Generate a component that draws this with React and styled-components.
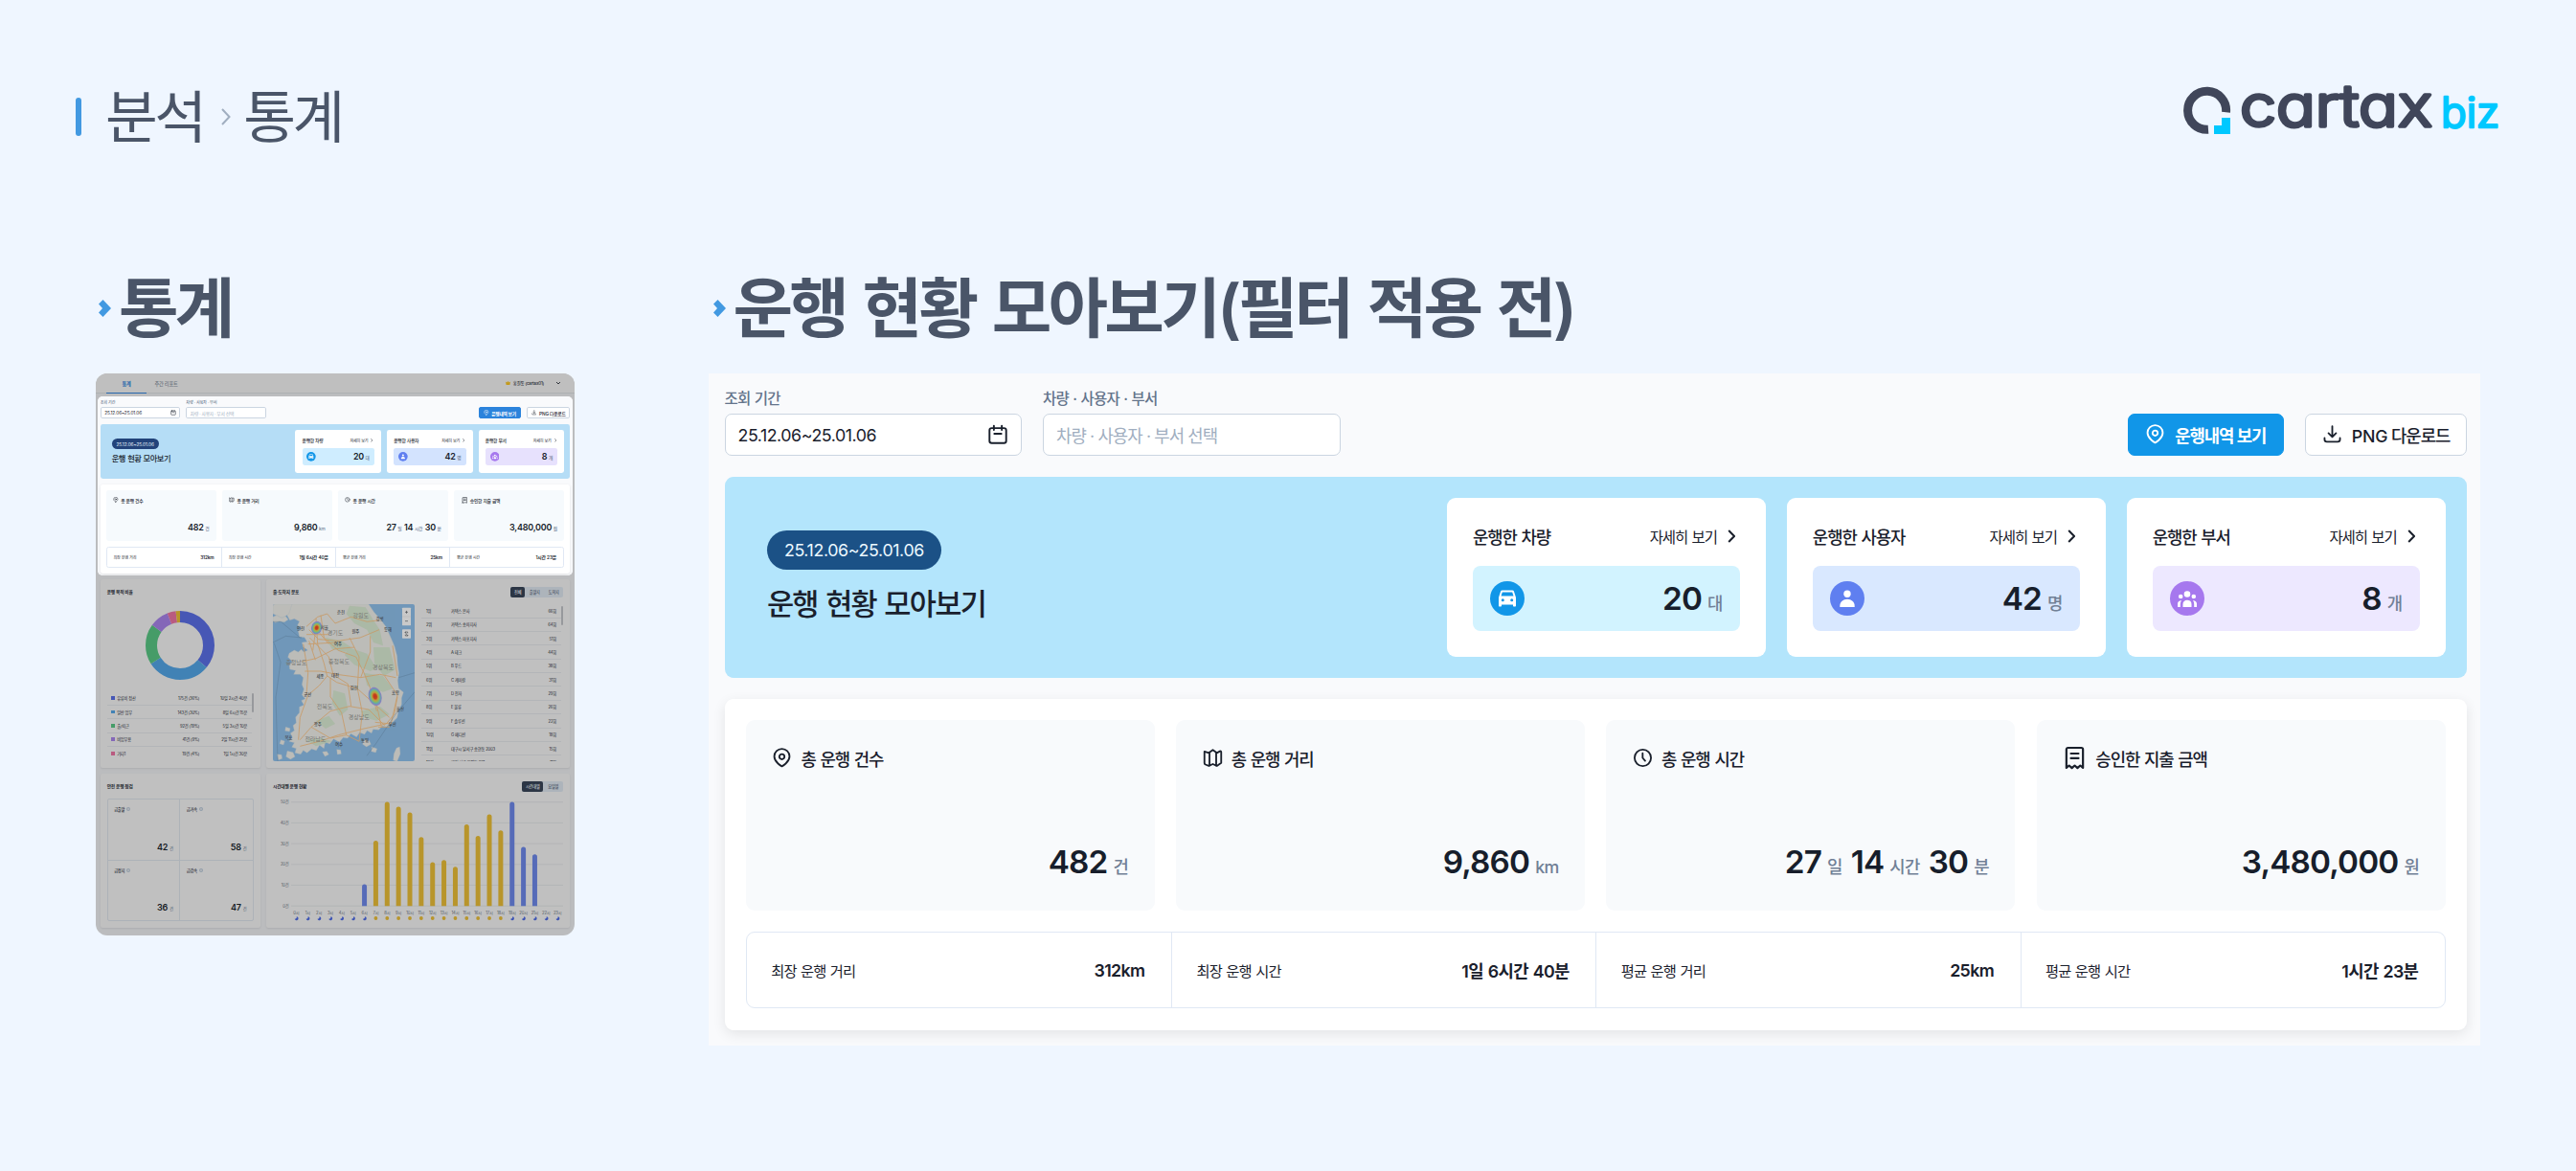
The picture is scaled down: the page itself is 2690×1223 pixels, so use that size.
import styled, { createGlobalStyle, ThemeProvider } from "styled-components";

const GlobalStyle = createGlobalStyle`
  * {
    box-sizing: border-box;
  }
  body {
    margin: 0;
    background: #eff6ff;
    font-family: Inter, "Noto Sans CJK KR", sans-serif;
    color: #1a202c;
  }
`;

const mainTheme = {
  primary: "#1196e8",
  banner: "#b3e5fc",
  pill: "#1b5186",
  cyanBox: "#d2f3ff",
  indigoBox: "#d9e8ff",
  purpleBox: "#ede8ff",
  stat: "#f8fafc",
  width: 1850,
  left: 16.5,
  right: 14,
  bottom: 16,
  radius: 0,
};

const miniTheme = {
  ...mainTheme,
  primary: "#2b83dc",
  banner: "#b5ddf6",
  pill: "#22437a",
  cyanBox: "#cfedff",
  indigoBox: "#d3e3fe",
  purpleBox: "#e7e1fd",
  stat: "#f6fafd",
  width: 1840,
  left: 10,
  right: 10,
  bottom: 8,
  radius: 20,
};

/* ---------- page ---------- */

const Page = styled.div`
  width: 2690px;
  height: 1223px;
  overflow: hidden;
  background: #eff6ff;
`;

const Header = styled.header`
  display: flex;
  justify-content: space-between;
  height: 282px;
  padding: 76px 78px 0 79px;
`;

const Crumbs = styled.div`
  display: flex;
  align-items: center;
  height: 92px;
  font-size: 59.5px;
  line-height: 80px;
  letter-spacing: -0.06em;
  color: #4a5568;
`;

const CrumbBar = styled.span`
  width: 6px;
  height: 40px;
  margin-right: 25px;
  border-radius: 3px;
  background: #4299e1;
`;

const CrumbArrow = styled.svg`
  width: 10px;
  height: 18px;
  margin: 0 13px 0 19px;
`;

const Columns = styled.main`
  display: grid;
  grid-template-columns: 500px 1850px;
  column-gap: 140px;
  padding-left: 100px;
`;

const Heading = styled.h2`
  display: flex;
  align-items: center;
  height: 80px;
  margin: 0 0 ${(p) => p.$gap}px ${(p) => p.$indent}px;
  font-size: 68px;
  font-weight: 600;
  line-height: 80px;
  letter-spacing: -0.055em;
  word-spacing: 0.06em;
  white-space: nowrap;
  color: #4a5568;

  svg {
    width: 13px;
    height: 18px;
    margin-right: 8px;
  }
`;

/* ---------- overview panel ---------- */

const Panel = styled.section`
  width: ${(p) => p.theme.width}px;
  padding: 16px ${(p) => p.theme.right}px ${(p) => p.theme.bottom}px ${(p) => p.theme.left}px;
  background: #f9fafc;
  border-radius: ${(p) => p.theme.radius}px;
`;

const Toolbar = styled.div`
  display: flex;
  align-items: flex-end;
  gap: 22px;
`;

const Field = styled.label`
  display: flex;
  flex-direction: column;
  gap: 8px;
  width: 310.5px;
`;

const FieldLabel = styled.span`
  height: 18px;
  font-size: 15.5px;
  font-weight: 500;
  line-height: 21px;
  letter-spacing: -0.05em;
  word-spacing: 0.06em;
  color: #64748b;
`;

const FieldBox = styled.span`
  display: flex;
  align-items: center;
  justify-content: space-between;
  height: 44px;
  padding: 0 13px;
  border: 1.1px solid #cbd5e1;
  border-radius: 7px;
  background: #fff;
  font-size: 17.8px;
  letter-spacing: ${(p) => (p.$placeholder ? "-0.05em" : "-0.025em")};
  color: ${(p) => (p.$placeholder ? "#a0aec0" : "#1a202c")};
`;

const Actions = styled.div`
  display: flex;
  gap: 22px;
  margin-left: auto;
`;

const Button = styled.button`
  display: flex;
  align-items: center;
  justify-content: center;
  gap: 10px;
  width: ${(p) => (p.$primary ? 163.5 : 169)}px;
  height: 44.5px;
  padding: 0;
  border: 1.1px solid ${(p) => (p.$primary ? p.theme.primary : "#cbd5e1")};
  border-radius: 7px;
  background: ${(p) => (p.$primary ? p.theme.primary : "#fff")};
  font-family: inherit;
  font-size: 17.8px;
  font-weight: ${(p) => (p.$primary ? 600 : 500)};
  letter-spacing: -0.06em;
  white-space: nowrap;
  color: ${(p) => (p.$primary ? "#fff" : "#1a202c")};
`;

const Latin = styled.span`
  letter-spacing: -0.01em;
`;

const Banner = styled.div`
  display: flex;
  align-items: center;
  justify-content: space-between;
  height: 209.5px;
  margin-top: 22px;
  padding: 0 22.2px 0 44.4px;
  border-radius: 9px;
  background: ${(p) => p.theme.banner};
`;

const Period = styled.div`
  display: inline-flex;
  align-items: center;
  height: 41px;
  padding: 0 18px;
  border-radius: 21px;
  background: ${(p) => p.theme.pill};
  font-size: 17.8px;
  letter-spacing: -0.02em;
  color: #ebf8ff;
`;

const BannerTitle = styled.div`
  margin-top: 16px;
  font-size: 30.6px;
  font-weight: 500;
  line-height: 40px;
  letter-spacing: -0.055em;
  word-spacing: 0.06em;
`;

const Cards = styled.div`
  display: flex;
  gap: 22.2px;
`;

const Card = styled.div`
  width: 332.7px;
  height: 165.5px;
  padding: 26.6px;
  border-radius: 9px;
  background: #fff;
`;

const CardHead = styled.div`
  display: flex;
  align-items: center;
  justify-content: space-between;
  height: 27px;
  margin-bottom: 17.5px;
  font-size: 17.8px;
  font-weight: 500;
  letter-spacing: -0.06em;
  word-spacing: 0.06em;
`;

const More = styled.span`
  display: flex;
  align-items: center;
  gap: 11px;
  padding-right: 5px;
  font-size: 15.5px;
  font-weight: 400;

  svg {
    width: 8.5px;
    height: 14px;
  }
`;

const CardBox = styled.div`
  display: flex;
  align-items: center;
  justify-content: space-between;
  height: 67.5px;
  padding: 0 17.8px;
  border-radius: 8px;
  background: ${(p) => p.theme[p.$tone]};
`;

const Round = styled.svg`
  width: 36px;
  height: 36px;
`;

const Amount = styled.div`
  display: flex;
  align-items: baseline;
  justify-content: flex-end;
  padding: 6px 1px 0 0;
  font-size: 33.3px;
  font-weight: 600;
  line-height: 44px;
  letter-spacing: -0.025em;
  color: #171e2b;
`;

const Unit = styled.span`
  margin: 0 ${(p) => (p.$more ? 9 : 0)}px 0 6px;
  font-size: 17.8px;
  font-weight: 500;
  letter-spacing: -0.04em;
  color: #718096;
`;

const Summary = styled.div`
  height: 346px;
  margin-top: 22.2px;
  padding: 22.2px;
  border-radius: 9px;
  background: #fff;
  box-shadow: 0 4px 14px rgba(0, 0, 0, 0.09);
`;

const Stats = styled.div`
  display: grid;
  grid-template-columns: repeat(4, 1fr);
  gap: 22.2px;
`;

const Stat = styled.div`
  display: flex;
  flex-direction: column;
  justify-content: space-between;
  height: 199px;
  padding: 27px 26.7px 22.5px;
  border-radius: 9px;
  background: ${(p) => p.theme.stat};
`;

const StatTitle = styled.div`
  display: flex;
  align-items: center;
  gap: 9px;
  height: 26px;
  padding-left: 1px;
  font-size: 17.8px;
  font-weight: 500;
  letter-spacing: -0.06em;
  word-spacing: 0.06em;
`;

const Averages = styled.div`
  display: grid;
  grid-template-columns: repeat(4, 1fr);
  height: 79.5px;
  margin-top: 22.5px;
  border: 1.1px solid #e0e8f4;
  border-radius: 9px;
`;

const Average = styled.div`
  display: flex;
  align-items: center;
  justify-content: space-between;
  padding: 0 27.5px 0 25.5px;
  font-size: 15.3px;
  letter-spacing: -0.055em;
  word-spacing: 0.06em;

  & + & {
    border-left: 1.1px solid #e0e8f4;
  }

  b {
    font-size: 17.8px;
    font-weight: 600;
    letter-spacing: -0.035em;
  }
`;

const Icon = styled.svg.attrs({
  viewBox: "0 0 24 24",
  fill: "none",
  stroke: "currentColor",
  strokeWidth: 2.1,
  strokeLinecap: "round",
  strokeLinejoin: "round",
})`
  flex: none;
  width: ${(p) => p.$size || 21}px;
  height: ${(p) => p.$size || 21}px;
`;

const PinIcon = () => (
  <Icon>
    <path d="M12 22.2S2.9 17.4 2.9 10.3a9.1 9.1 0 0 1 18.2 0c0 7.1-9.1 11.9-9.1 11.9z" />
    <circle cx="12" cy="10.6" r="3.1" />
  </Icon>
);

const MapIcon = () => (
  <Icon>
    <path d="M2 4.4l5.2 1.7L12 2.6l4.8 3.5 3.6-1.9c.8-.4 1.6 0 1.6.9v13l-5.2 3.5-4.8-2.2-4.8 2.2-4-1.6c-.8-.3-1.2-.8-1.2-1.6z" />
    <path d="M8 6v15M16 6v15" />
  </Icon>
);

const ClockIcon = () => (
  <Icon>
    <circle cx="12" cy="12" r="9.8" />
    <path d="M11.8 6.5v5.5l3 3.6" />
  </Icon>
);

const ReceiptIcon = () => (
  <Icon $size={25}>
    <path d="M3.7 22V3.5c0-1 .6-1.6 1.6-1.6h13.4c1 0 1.6.6 1.6 1.6V22l-2.7-2.3-2.8 2.5-2.8-2.5-2.8 2.5-2.8-2.5z" />
    <path d="M8.2 7.7h7.6M8.2 12.4h7.6" />
  </Icon>
);

const DownloadIcon = () => (
  <Icon>
    <path d="M12 2.5V15M7.5 10.8l4.5 4.4 4.5-4.4M2.8 16.5v1.8c0 1.7 1 2.7 2.7 2.7h13c1.7 0 2.7-1 2.7-2.7v-1.8" />
  </Icon>
);

const CalendarIcon = () => (
  <Icon $size={22}>
    <rect x="2.5" y="4.5" width="19" height="17" rx="2.5" />
    <path d="M7.5 2v4.5M16.5 2v4.5M8 11h8" />
  </Icon>
);

const Chevron = () => (
  <svg viewBox="0 0 8.5 14" fill="none" stroke="#1a202c" strokeWidth="2">
    <path d="M1.2 1L7 7l-5.8 6" />
  </svg>
);

const CarBadge = () => (
  <Round viewBox="0 0 36 36">
    <circle cx="18" cy="18" r="18" fill="#1196e8" />
    <path
      fill="#fff"
      fillRule="evenodd"
      d="M12.6 9.5h10.8c.8 0 1.3.4 1.5 1.1L27 17v8.5c0 .6-.4 1-1 1h-1c-.6 0-1-.4-1-1v-1H12v1c0 .6-.4 1-1 1h-1c-.6 0-1-.4-1-1V17l2.1-6.4c.2-.7.7-1.1 1.5-1.1zM12.8 11.5l-1.3 4h13l-1.3-4zM13.3 18.3a1.5 1.5 0 1 0 0 3 1.5 1.5 0 0 0 0-3zM22.7 18.3a1.5 1.5 0 1 0 0 3 1.5 1.5 0 0 0 0-3z"
    />
  </Round>
);

const UserBadge = () => (
  <Round viewBox="0 0 36 36">
    <circle cx="18" cy="18" r="18" fill="#5f7ff0" />
    <circle cx="18" cy="13.2" r="3.7" fill="#fff" />
    <path fill="#fff" d="M10.3 27v-1.2c0-4 3.4-7 7.7-7s7.7 3 7.7 7V27z" />
  </Round>
);

const TeamBadge = () => (
  <Round viewBox="0 0 36 36">
    <circle cx="18" cy="18" r="18" fill="#a678ee" />
    <g fill="#fff">
      <circle cx="18" cy="13.5" r="3.3" />
      <circle cx="11.2" cy="16" r="2.3" />
      <circle cx="24.8" cy="16" r="2.3" />
      <path d="M13.5 27v-3c0-2.6 1.9-4.3 4.5-4.3s4.5 1.7 4.5 4.3v3zM8 27v-3.5c0-2 1.3-3.3 4-3.6-.8 1.2-1.2 2.5-1.2 4V27zM28 27v-3.5c0-2-1.3-3.3-4-3.6.8 1.2 1.2 2.5 1.2 4V27z" />
    </g>
  </Round>
);

const cards = [
  { title: "운행한 차량", value: "20", unit: "대", tone: "cyanBox", badge: <CarBadge /> },
  { title: "운행한 사용자", value: "42", unit: "명", tone: "indigoBox", badge: <UserBadge /> },
  { title: "운행한 부서", value: "8", unit: "개", tone: "purpleBox", badge: <TeamBadge /> },
];

const stats = [
  { icon: <PinIcon />, title: "총 운행 건수", values: [["482", "건"]] },
  { icon: <MapIcon />, title: "총 운행 거리", values: [["9,860", "km"]] },
  { icon: <ClockIcon />, title: "총 운행 시간", values: [["27", "일"], ["14", "시간"], ["30", "분"]] },
  { icon: <ReceiptIcon />, title: "승인한 지출 금액", values: [["3,480,000", "원"]] },
];

const averages = [
  ["최장 운행 거리", "312km"],
  ["최장 운행 시간", "1일 6시간 40분"],
  ["평균 운행 거리", "25km"],
  ["평균 운행 시간", "1시간 23분"],
];

const Overview = () => (
  <Panel>
    <Toolbar>
      <Field>
        <FieldLabel>조회 기간</FieldLabel>
        <FieldBox>
          25.12.06~25.01.06
          <CalendarIcon />
        </FieldBox>
      </Field>
      <Field>
        <FieldLabel>차량 · 사용자 · 부서</FieldLabel>
        <FieldBox $placeholder>차량 · 사용자 · 부서 선택</FieldBox>
      </Field>
      <Actions>
        <Button $primary>
          <PinIcon />
          운행내역 보기
        </Button>
        <Button>
          <DownloadIcon />
          <span>
            <Latin>PNG</Latin> 다운로드
          </span>
        </Button>
      </Actions>
    </Toolbar>
    <Banner>
      <div>
        <Period>25.12.06~25.01.06</Period>
        <BannerTitle>운행 현황 모아보기</BannerTitle>
      </div>
      <Cards>
        {cards.map((c) => (
          <Card key={c.title}>
            <CardHead>
              {c.title}
              <More>
                자세히 보기
                <Chevron />
              </More>
            </CardHead>
            <CardBox $tone={c.tone}>
              {c.badge}
              <Amount>
                {c.value}
                <Unit>{c.unit}</Unit>
              </Amount>
            </CardBox>
          </Card>
        ))}
      </Cards>
    </Banner>
    <Summary>
      <Stats>
        {stats.map((s) => (
          <Stat key={s.title}>
            <StatTitle>
              {s.icon}
              {s.title}
            </StatTitle>
            <Amount>
              {s.values.map(([n, u], i) => (
                <span key={u}>
                  {n}
                  <Unit $more={i < s.values.length - 1}>{u}</Unit>
                </span>
              ))}
            </Amount>
          </Stat>
        ))}
      </Stats>
      <Averages>
        {averages.map(([name, value]) => (
          <Average key={name}>
            {name}
            <b>{value}</b>
          </Average>
        ))}
      </Averages>
    </Summary>
  </Panel>
);

/* ---------- dimmed dashboard ---------- */

const Dashboard = styled.div`
  width: 500px;
  height: 586.5px;
  border-radius: 12px;
  overflow: hidden;
  background: #bbbcbe;
  font-size: 4.2px;
  letter-spacing: -0.04em;
  color: #20252e;
`;

const Tabs = styled.div`
  display: flex;
  align-items: stretch;
  height: 21px;
  padding: 0 12px 0 11px;
  border-bottom: 1px solid #adb0b3;
  background: #bfbfbf;
`;

const Tab = styled.span`
  display: flex;
  align-items: center;
  justify-content: center;
  width: ${(p) => (p.$active ? 42 : 41)}px;
  margin-bottom: -1px;
  border-bottom: 1px solid ${(p) => (p.$active ? "#2767ab" : "transparent")};
  font-size: 5.2px;
  font-weight: ${(p) => (p.$active ? 700 : 500)};
  color: ${(p) => (p.$active ? "#2767ab" : "#6b737e")};
`;

const Account = styled.span`
  display: flex;
  align-items: center;
  gap: 3px;
  margin-left: auto;
  font-size: 4.4px;
  font-weight: 500;

  svg:last-child {
    margin-left: 7px;
  }
`;

const Spotlight = styled.div`
  width: 496px;
  height: 187px;
  margin: 3px 2px 4px;
  overflow: hidden;
  border-radius: 5px;
  background: #f9fafc;

  & > section {
    zoom: 0.2696;
  }
`;

const Row = styled.div`
  display: flex;
  gap: 6px;
  margin: 0 4.7px 6px;
`;

const Box = styled.div`
  width: ${(p) => p.$width}px;
  height: ${(p) => p.$height}px;
  padding: 8px 7px 0;
  border-radius: 2px;
  background: #c0c0c0;
  box-shadow: 0 1px 2px rgba(0, 0, 0, 0.08);
`;

const BoxTitle = styled.div`
  display: flex;
  align-items: center;
  justify-content: space-between;
  height: 10px;
  font-size: 4.7px;
  font-weight: 600;
`;

const Donut = styled.svg`
  display: block;
  width: 72px;
  height: 72px;
  margin: 14.5px auto 13px;
`;

const Scrolled = styled.div`
  display: flex;
  justify-content: space-between;
  flex: 1;
  overflow: hidden;
`;

const Thumb = styled.i`
  width: 2px;
  height: 20px;
  margin-top: 1.5px;
  border-radius: 1px;
  background: #97999c;
`;

const PurposeRow = styled.div`
  display: grid;
  grid-template-columns: 3.5px 38px 1fr 47.5px;
  gap: 2.5px;
  align-items: center;
  width: 151px;
  height: 14.35px;
  padding: 0 4.5px;
  border-bottom: 0.5px solid #b3b5b8;
  text-align: right;

  &:last-child {
    border: 0;
  }

  span:nth-child(2) {
    text-align: left;
  }
`;

const Swatch = styled.i`
  width: 3.5px;
  height: 3.5px;
  background: ${(p) => p.$color};
`;

const Toggle = styled.div`
  display: flex;
  height: 11px;
  border-radius: 2px;
  background: #adb4bb;
  font-size: 4.2px;
  font-weight: 500;
`;

const ToggleItem = styled.span`
  display: flex;
  align-items: center;
  justify-content: center;
  width: ${(p) => p.$width}px;
  border-radius: 2px;
  background: ${(p) => (p.$active ? "#2c3645" : "transparent")};
  color: ${(p) => (p.$active ? "#c4c8cd" : "#465060")};
`;

const Places = styled.div`
  display: flex;
  gap: 7px;
  height: 164px;
  margin-top: 8.3px;
`;

const PlaceRow = styled.div`
  display: grid;
  grid-template-columns: 26px 1fr 20px;
  align-items: center;
  width: 146px;
  height: 14.37px;
  padding: 0 5px;
  border-bottom: 0.5px solid #b3b5b8;

  span:last-child {
    text-align: right;
  }
`;

const Safety = styled.div`
  display: grid;
  grid-template-columns: 1fr 1fr;
  height: 128px;
  margin-top: 8px;
  border: 0.5px solid #adb2b8;
  border-radius: 2px;
`;

const SafetyCell = styled.div`
  display: flex;
  flex-direction: column;
  justify-content: space-between;
  padding: 7px 6.5px 8px;
  border: 0 solid #adb2b8;
  border-width: 0 ${(p) => (p.$right ? 0 : 0.5)}px ${(p) => (p.$last ? 0 : 0.5)}px 0;
  font-weight: 500;

  div {
    display: flex;
    align-items: center;
    gap: 2px;
  }
  div:last-child {
    align-items: baseline;
    justify-content: flex-end;
    color: #5f6c7d;
  }
  b {
    font-size: 9px;
    font-weight: 600;
    color: #171c25;
  }
`;

const Drawing = styled.svg`
  display: block;
  flex: none;
`;

const Plot = styled(Drawing)`
  margin-top: 7px;
`;

const purposes = [
  { name: "유류비 정산", count: "175건 (36%)", time: "10일 2시간 40분", pct: 36, color: "#4757b5" },
  { name: "일반 업무", count: "143건 (30%)", time: "8일 6시간 15분", pct: 30, color: "#4182b5" },
  { name: "출/퇴근", count: "92건 (19%)", time: "5일 3시간 10분", pct: 19, color: "#469c68" },
  { name: "비업무용", count: "41건 (9%)", time: "2일 11시간 25분", pct: 9, color: "#8467b8" },
  { name: "기타1", count: "19건 (4%)", time: "1일 1시간 30분", pct: 4, color: "#b95b80" },
  { name: "", count: "", time: "", pct: 2, color: "#b8952a" },
];

const places = [
  ["1위", "카택스 본사", "66회"],
  ["2위", "카택스 송파지사", "64회"],
  ["3위", "카택스 마포지사", "51회"],
  ["4위", "A 테크", "44회"],
  ["5위", "B 푸드", "38회"],
  ["6위", "C 케미칼", "31회"],
  ["7위", "D 전자", "29회"],
  ["8위", "E 물류", "26회"],
  ["9위", "F 솔루션", "22회"],
  ["10위", "G 메디션", "18회"],
  ["11위", "대구시 달서구 송현동 2003", "15회"],
  ["12위", "대전 서구 월평동 321", "11회"],
];

const safety = [
  ["급출발", 42],
  ["급가속", 58],
  ["급정지", 36],
  ["급감속", 47],
];

// bar heights by hour, in px of a 108px tall plot
const hours = [
  0, 0, 0, 0, 0, 0, 22.7, 68.3, 108.7, 103.7, 97.7, 72, 45.7, 48, 41, 85.3, 73.3, 95.7, 79, 108.7,
  61.7, 54, 0, 0,
];

const PurposeDonut = () => {
  let from = 0;
  return (
    <Donut viewBox="0 0 72 72">
      <g transform="rotate(-90 36 36)" fill="none" strokeWidth="12">
        {purposes.map((p) => {
          const start = from;
          from += p.pct;
          return (
            <circle
              key={p.color}
              cx="36"
              cy="36"
              r="30"
              pathLength="100"
              stroke={p.color}
              strokeDasharray={`${p.pct} ${100 - p.pct}`}
              strokeDashoffset={-start}
            />
          );
        })}
      </g>
    </Donut>
  );
};

const cities = [
  ["춘천", 228, 46], ["강릉", 350, 67], ["인천", 102, 97], ["서울", 176, 92], ["원주", 274, 106],
  ["동해", 375, 98], ["여주", 219, 144], ["세종", 163, 246], ["대전", 210, 243], ["김천", 269, 281],
  ["군산", 124, 303], ["포항", 399, 297], ["울산", 414, 349], ["부산", 389, 396], ["광주", 155, 397],
  ["목포", 64, 437], ["여수", 222, 459], ["통영", 303, 447],
];

const provinces = [
  ["강원도", 290, 56], ["경기도", 210, 112], ["충청남도", 88, 203], ["충청북도", 222, 200],
  ["경상북도", 360, 219], ["전북도", 177, 342], ["경상남도", 284, 374], ["전라남도", 148, 443],
];

const KoreaMap = () => (
  <Drawing width="148" height="164" viewBox="15 15 444 492">
    <defs>
      <radialGradient id="heat">
        <stop offset="0" stopColor="#c0331c" />
        <stop offset="0.25" stopColor="#c5441f" />
        <stop offset="0.42" stopColor="#bf9a3d" />
        <stop offset="0.58" stopColor="#93b45c" />
        <stop offset="0.75" stopColor="#62aaa8" />
        <stop offset="0.9" stopColor="#8580bd" />
        <stop offset="1" stopColor="#8d8abf" stopOpacity="0.7" />
      </radialGradient>
      <clipPath id="mapBox">
        <rect x="15" y="15" width="444" height="492" rx="6" />
      </clipPath>
    </defs>
    <g clipPath="url(#mapBox)">
      <rect x="15" y="15" width="444" height="492" fill="#7097b9" />
      <g fill="#bcbcb8" stroke="#a4b0b5" strokeWidth="1">
        <path d="M60 15h255l16 24 24 28 15 20 14 32 12 28 8 30 2 30 4 25-4 22 3 25 15 12-6 18 0 20-10 22-4 20-14 14-18 15-15-3-10 12-18-2-5 12-14-8-8 12-15-6-10 14-18-10-10 14-14-2-12 14-18-10-12 16-14-6-4 20-14-10-10 16-15-4-14 12-12-8-8 12-18-4 4-14-14-4 8-14-16-4 10-12-6-14 12-8-4-16 10-8-2-18 12-14 0-18 14-6-8-14 12-6-10-12 6-18-6-14 4-22-10-10-20 0 6-12-18-4-2-14 10-10-14-14 4-12 16-10 12 6 10-8 8 8 12-6-14-10-4-14 16-2-8-14-16-2-4-18 12-8-14-10 6-12-16-8-14 4-8-14z" />
        <path d="M15 15h60l-10 30-20 14-30-14zM15 55l14-6 10 8 16-4 8 10-12 8-16-2-12 4-8-4zM60 475l18 4 6 14-14 8-14-8zM28 485l14 2 2 12-12 4zM40 440l12 4-4 12-12-4zM300 440l16 2 6 12-14 8-12-8zM325 462l16 6-4 12-14-4zM402 466l10-4 2 22-10 24-12-4 2-20zM55 400l14 4-2 10-14-2zM215 470l12 2 2 12-12 2zM170 478l14-2 6 10-12 6z" />
      </g>
      <g fill="#a6b8a0" opacity="0.75">
        <path d="M255 20l50 5 25 40 20 30 10 50-30-10-20-40-40-20-25-30z" />
        <path d="M180 120l50 10 30 20-20 15-40-10zM250 150l60 20 30 45-20 10-50-20-30-30zM330 150l50 0 18 70-35 20-30-40zM205 285l35 10 10 50-25 20-25-40zM300 230l60 10 30 40-30 10-50-20zM290 350l60-15 30 25-40 20-40-10zM150 380l40-15 20 25-30 15zM120 440l50-5 30 10-50 15z" />
      </g>
      <g fill="none" stroke="#c79b69" strokeWidth="2.6">
        <path d="M120 85l35-30 30-10 25 30 50-20 50 15 40-5M128 95l30 30 60 5 70-10 60-25M150 60l5 80 20 60 10 40 30 20 65 20 50 45 50 45M165 50l10 70 45 40 55 20 25 50 25 60 15 60M105 195l45-10 60-30 60-5M115 225l50 0 50 10 75 10 60-10 50 10M120 300l5-70-15-90M95 440l5-70 25-70 35-30 25-30M100 460l60-15 60-20 80-20 70-15 25-30 10-55M135 400l60-50 60-15 60 10 50 50M135 400l-35 40M135 400l60 35 50-10-15-70-35-50 0-60M245 425l40 20 10-90-15-75 5-100-30-60M290 245l30-80 0-50M130 120l60 60 15 60M125 140l90-5M120 110l70 0M140 80l50 60M140 160l10-70M128 130l20 60M335 385l50 5 20-90-40-60M345 400l35 0M340 330l15 70M260 335l-10-70-40-25M390 145l15 95" />
      </g>
      <g fill="none" stroke="#54718c" strokeWidth="1.2">
        <path d="M15 70l25 0 60 50M15 135l40-20 50 5M30 507l-6-200 15-110-20-60M459 230l-50 15M459 290l-60 70-60 90-30 40" />
      </g>
      <ellipse cx="152" cy="89" rx="17" ry="21" fill="url(#heat)" transform="rotate(15 152 89)" />
      <ellipse cx="335" cy="304" rx="21" ry="30" fill="url(#heat)" transform="rotate(-15 335 304)" />
      <g fontSize="18" fill="#777873" textAnchor="middle">
        {provinces.map(([name, x, y]) => (
          <text key={name} x={x} y={y}>{name}</text>
        ))}
      </g>
      <g fontSize="13" fontWeight="500" fill="#42454a" textAnchor="middle">
        {cities.map(([name, x, y]) => (
          <text key={name} x={x} y={y}>{name}</text>
        ))}
      </g>
      <g fill="#c9c9c9">
        <rect x="420" y="26" width="27" height="56" rx="2" />
        <rect x="420" y="94" width="27" height="28" rx="2" />
      </g>
      <g stroke="#3b3f45" strokeWidth="1.8" fill="none">
        <path d="M429 40h9M433.5 35.5v9M429 68h9M429 104v-2h8v4M438 112v2h-8v-4M429 102l8 12" />
        <path d="M420 54h27" stroke="#aaa" strokeWidth="1" />
      </g>
    </g>
  </Drawing>
);

const HourChart = () => (
  <Plot width="303" height="134" viewBox="0 0 303 134">
    {[50, 40, 30, 20, 10, 0].map((n, i) => (
      <g key={n}>
        <path d={`M19 ${4.7 + i * 21.7}h284`} stroke="#a9acb0" strokeWidth="0.6" />
        <text x="16.5" y={6.2 + i * 21.7} fontSize="4.2" textAnchor="end" fill="#525a66">
          {n}건
        </text>
      </g>
    ))}
    {hours.map((h, i) => {
      const x = 24.4 + i * 11.86;
      const day = i > 6 && i < 19;
      return (
        <g key={i}>
          {h > 0 && (
            <path
              d={`M${x - 2.5} 113.2v${-(h - 2.5)}a2.5 2.5 0 0 1 5 0v${h - 2.5}z`}
              fill={day ? "#b8952b" : "#566bb8"}
            />
          )}
          <text x={x} y="121.5" fontSize="4.2" textAnchor="middle" fill="#525a66">
            {i}시
          </text>
          {day ? (
            <circle cx={x} cy="126" r="1.9" fill="#b8952b" />
          ) : (
            <path
              d={`M${x + 0.3} 124.2a2 2 0 1 1 -2 2.6a1.9 1.9 0 0 0 2 -2.6z`}
              fill="#3d54b4"
            />
          )}
        </g>
      );
    })}
  </Plot>
);

const Preview = () => (
  <Dashboard>
    <Tabs>
      <Tab $active>통계</Tab>
      <Tab>주간 리포트</Tab>
      <Account>
        <Drawing width="5" height="4" viewBox="0 0 5 4">
          <path d="M0 .6l1.3 1L2.5 0l1.2 1.6L5 .6 4.4 4H.6z" fill="#c29a1c" />
        </Drawing>
        홍길동 (cartax01)
        <Drawing width="10" height="4" viewBox="0 0 10 4">
          <path d="M3 1l2 2 2-2" fill="none" stroke="#20252e" strokeWidth="0.9" />
        </Drawing>
      </Account>
    </Tabs>
    <Spotlight>
      <ThemeProvider theme={miniTheme}>
        <Overview />
      </ThemeProvider>
    </Spotlight>
    <Row>
      <Box $width={167.3} $height={197.3}>
        <BoxTitle>운행 목적 비율</BoxTitle>
        <PurposeDonut />
        <Scrolled>
          <div>
            {purposes.slice(0, 5).map((p) => (
              <PurposeRow key={p.name}>
                <Swatch $color={p.color} />
                <span>{p.name}</span>
                <span>{p.count}</span>
                <span>{p.time}</span>
              </PurposeRow>
            ))}
          </div>
          <Thumb />
        </Scrolled>
      </Box>
      <Box $width={317.3} $height={197.3}>
        <BoxTitle>
          출·도착지 분포
          <Toggle>
            <ToggleItem $active $width={15}>전체</ToggleItem>
            <ToggleItem $width={20}>출발지</ToggleItem>
            <ToggleItem $width={20}>도착지</ToggleItem>
          </Toggle>
        </BoxTitle>
        <Places>
          <KoreaMap />
          <Scrolled>
            <div>
              {places.map(([rank, name, count]) => (
                <PlaceRow key={rank}>
                  <span>{rank}</span>
                  <span>{name}</span>
                  <span>{count}</span>
                </PlaceRow>
              ))}
            </div>
            <Thumb />
          </Scrolled>
        </Places>
      </Box>
    </Row>
    <Row>
      <Box $width={167.3} $height={161}>
        <BoxTitle>안전 운행 점검</BoxTitle>
        <Safety>
          {safety.map(([name, count], i) => (
            <SafetyCell key={name} $right={i % 2 === 1} $last={i > 1}>
              <div>
                {name}
                <Drawing width="4" height="4" viewBox="0 0 4 4">
                  <circle cx="2" cy="2" r="1.7" fill="none" stroke="#75869b" strokeWidth="0.5" />
                  <path d="M2 1v2" stroke="#75869b" strokeWidth="0.6" />
                </Drawing>
              </div>
              <div>
                <b>{count}</b>건
              </div>
            </SafetyCell>
          ))}
        </Safety>
      </Box>
      <Box $width={317.3} $height={161}>
        <BoxTitle>
          시간대별 운행 현황
          <Toggle>
            <ToggleItem $active $width={22}>시간대별</ToggleItem>
            <ToggleItem $width={21}>요일별</ToggleItem>
          </Toggle>
        </BoxTitle>
        <HourChart />
      </Box>
    </Row>
  </Dashboard>
);

/* ---------- logo ---------- */

const LogoSvg = styled.svg`
  width: 334px;
  height: 70px;
  overflow: visible;
`;

const LogoWord = styled.text`
  font-family: Inter, sans-serif;
  font-size: ${(p) => p.$size}px;
  font-weight: 300;
  font-feature-settings: "cv11";
  fill: ${(p) => p.$color};
  stroke: ${(p) => p.$color};
  stroke-width: ${(p) => p.$stroke}px;
  stroke-linejoin: round;
`;

const Logo = () => (
  <LogoSvg viewBox="2279 76 334 70">
    <path
      d="M2325.5 117.3A20 20 0 1 0 2307 135.3"
      fill="none"
      stroke="#40465a"
      strokeWidth="9"
    />
    <path d="M2321 123h9v17h-17v-9h8z" fill="#00c8ff" />
    <LogoWord x="2340" y="132" $size={61} $stroke={3.6} $color="#40465a" textLength="201" lengthAdjust="spacingAndGlyphs">
      cartax
    </LogoWord>
    <LogoWord x="2550" y="132.5" $size={43} $stroke={2.6} $color="#00c8ff" textLength="61" lengthAdjust="spacingAndGlyphs">
      biz
    </LogoWord>
  </LogoSvg>
);

const HeadingArrow = () => (
  <svg viewBox="0 0 13 18">
    <path d="M0 4.5L4.5 0 13 9l-8.5 9L0 13.5 4 9z" fill="#4299e1" />
  </svg>
);

export default function App() {
  return (
    <ThemeProvider theme={mainTheme}>
      <GlobalStyle />
      <Page>
        <Header>
          <Crumbs>
            <CrumbBar />
            분석
            <CrumbArrow viewBox="0 0 10 18" fill="none" stroke="#a0aec0" strokeWidth="2">
              <path d="M1 1l7.5 8L1 17" />
            </CrumbArrow>
            통계
          </Crumbs>
          <Logo />
        </Header>
        <Columns>
          <div>
            <Heading $indent={3} $gap={28}>
              <HeadingArrow />
              통계
            </Heading>
            <Preview />
          </div>
          <div>
            <Heading $indent={4.5} $gap={28}>
              <HeadingArrow />
              운행 현황 모아보기(필터 적용 전)
            </Heading>
            <Overview />
          </div>
        </Columns>
      </Page>
    </ThemeProvider>
  );
}
